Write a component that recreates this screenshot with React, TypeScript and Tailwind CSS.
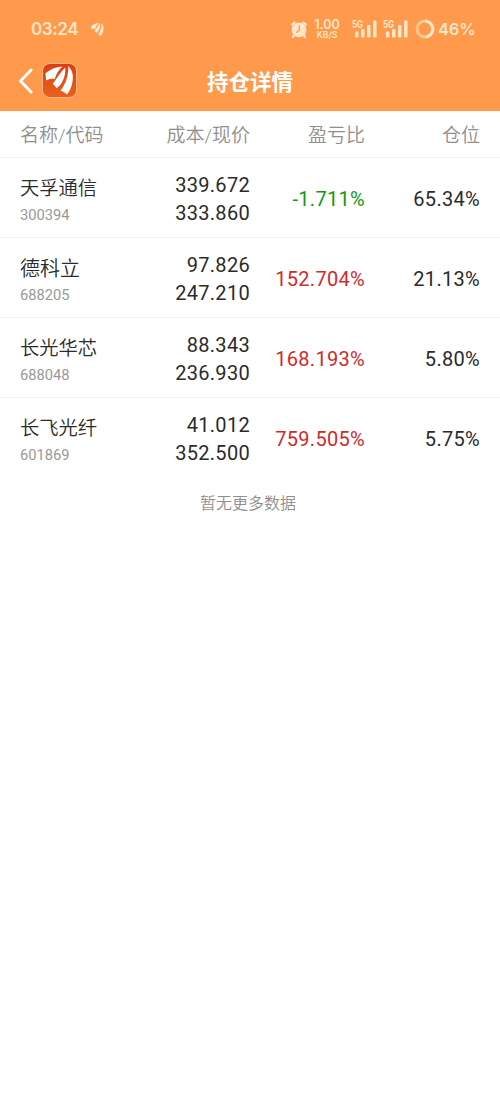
interface Holding {
  name: string;
  code: string;
  cost: string;
  price: string;
  profit: string;
  position: string;
}

const holdings: Holding[] = [
  { name: "天孚通信", code: "300394", cost: "339.672", price: "333.860", profit: "-1.711%", position: "65.34%" },
  { name: "德科立", code: "688205", cost: "97.826", price: "247.210", profit: "152.704%", position: "21.13%" },
  { name: "长光华芯", code: "688048", cost: "88.343", price: "236.930", profit: "168.193%", position: "5.80%" },
  { name: "长飞光纤", code: "601869", cost: "41.012", price: "352.500", profit: "759.505%", position: "5.75%" },
];

function Feathers({ className }: { className: string }) {
  return (
    <svg viewBox="0 0 34 34" className={className} fill="currentColor">
      <path d="M20 2.500C13 3 7 5.500 2.500 9.500L3.300 17C6 15.300 9 15 12 15.500C14 10 16 6 20 2.500Z" />
      <path d="M23 3.500C18 8 15 14 10 20.500C11.500 21.500 13 23 13.800 25C19.500 21.500 23.500 13 23 3.500Z" />
      <path d="M26 2C26.500 12 23 21 18 27.500C20.500 28 23 29.500 24.500 31.500C29.500 26 31.500 17 30.500 10.500C30 7 28 4 26 2Z" />
    </svg>
  );
}

function AlarmIcon() {
  return (
    <svg viewBox="0 0 18 19" className="h-[19px] w-[18px]">
      <path d="M2 4.500L4.500 2.500M16 4.500L13.500 2.500M4 15L3 17.200M14 15L15 17.200" stroke="#ffe6c8" strokeWidth="2.200" strokeLinecap="round" />
      <circle cx="9" cy="9.800" r="7.400" fill="#ffe6c8" />
      <path d="M9.300 6V10L6.800 12.200" fill="none" stroke="#ff9a4d" strokeWidth="1.300" strokeLinecap="round" />
    </svg>
  );
}

function Signal() {
  return (
    <svg viewBox="0 0 26 20" className="h-5 w-[26px]" fill="#ffe6c8">
      <text x="0" y="8.500" fontSize="10" fontWeight="700" textLength="11" lengthAdjust="spacingAndGlyphs">5G</text>
      <rect x="3" y="12.500" width="3.500" height="6" rx="1" />
      <rect x="9" y="10" width="3.500" height="8.500" rx="1" />
      <rect x="15" y="6" width="3.500" height="12.500" rx="1" />
      <rect x="21" y="1.500" width="3.500" height="17" rx="1" />
    </svg>
  );
}

function BatteryRing() {
  return (
    <svg viewBox="0 0 20 20" className="h-5 w-5" fill="none" strokeWidth="3">
      <circle cx="10" cy="10" r="8" stroke="#ffc58f" />
      <path d="M10 2A8 8 0 0 1 11 17.900" stroke="#ffe6c8" />
    </svg>
  );
}

function StatusBar() {
  return (
    <div className="flex h-[58px] items-center pl-[31px] pr-[25px] font-['Inter'] text-[#ffe6c8]">
      <span className="w-[47px] text-[17px] font-semibold leading-5 tracking-[-0.4px]">03:24</span>
      <Feathers className="ml-3 h-[15px] w-[15px]" />
      <div className="ml-auto flex items-center">
        <AlarmIcon />
        <div className="ml-[6px] flex w-[26px] flex-col items-center font-semibold">
          <span className="text-[12.5px] leading-[12px]">1.00</span>
          <span className="text-[8.5px] leading-[8px]">KB/S</span>
        </div>
        <div className="ml-3 flex gap-[5px]">
          <Signal />
          <Signal />
        </div>
        <div className="ml-[6px] flex items-center gap-[3px]">
          <BatteryRing />
          <span className="w-[37px] text-[16.5px] font-semibold leading-5 tracking-[-0.2px]">46%</span>
        </div>
      </div>
    </div>
  );
}

export default function App() {
  return (
    <div className="min-h-[1117px] w-[500px] bg-white font-['Roboto','Noto_Sans_CJK_SC',sans-serif] text-[#2b2b2b]">
      <header className="h-[111px] bg-[#ff9a4d]">
        <StatusBar />
        <div className="grid h-[45px] grid-cols-[1fr_auto_1fr] items-center px-[18px] text-white">
          <div className="flex items-center gap-[8px]">
            <svg viewBox="0 0 16 26" className="h-[26px] w-4" fill="none" stroke="currentColor" strokeWidth="3" strokeLinecap="round" strokeLinejoin="round">
              <path d="M13 2L2.500 13L13 24" />
            </svg>
            <div className="flex h-[35px] w-[35px] items-center justify-center rounded-[8px] border border-[#f8b582] bg-linear-to-b from-[#df3c15] to-[#e8611c]">
              <Feathers className="h-[33px] w-[33px]" />
            </div>
          </div>
          <h1 className="pt-1 text-[21.5px] font-bold leading-7">持仓详情</h1>
        </div>
      </header>

      <div className="grid h-[47px] grid-cols-[120px_110px_115px_115px] items-center border-b border-[#f0f0f0] px-5 pt-[5px] text-right text-[19px] font-[350] text-[#8f8f8f]">
        <span className="text-left">名称/代码</span>
        <span>成本/现价</span>
        <span>盈亏比</span>
        <span>仓位</span>
      </div>

      {holdings.map((item) => (
        <div
          key={item.code}
          className="grid h-20 grid-cols-[120px_110px_115px_115px] items-center border-b border-[#f0f0f0] px-5 pt-[3px] text-right text-[20px] tracking-[0.3px] last-of-type:border-transparent"
        >
          <div className="pt-1 text-left">
            <div className={`font-[350] leading-7 tracking-normal ${item.name.length > 3 ? "text-[19.3px]" : "text-[20px]"}`}>
              {item.name}
            </div>
            <div className="text-[14.7px] leading-[25px] tracking-normal text-[#999]">{item.code}</div>
          </div>
          <div className="leading-[28.5px]">
            <div>{item.cost}</div>
            <div>{item.price}</div>
          </div>
          <span className={item.profit.startsWith("-") ? "text-[#129912]" : "text-[#d02a2d]"}>{item.profit}</span>
          <span>{item.position}</span>
        </div>
      ))}

      <p className="pt-[14px] text-center text-[16px] font-[350] leading-6 text-[#8f8f8f]">
        <span className="mr-1">暂无更多数据</span>
      </p>
    </div>
  );
}
